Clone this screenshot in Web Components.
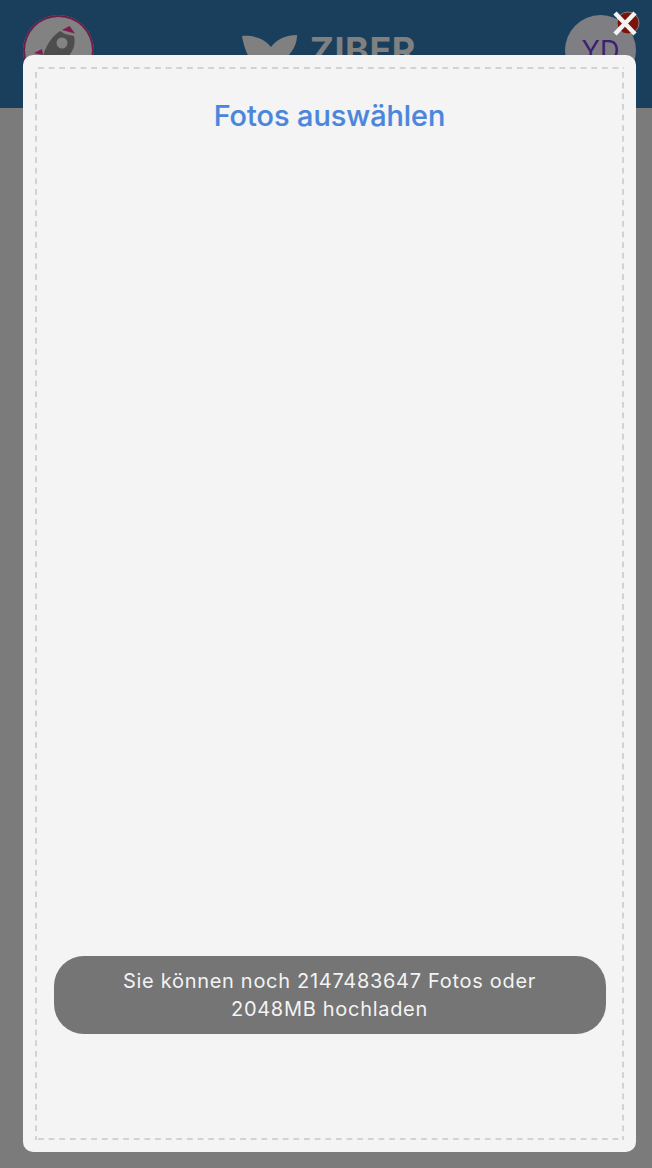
<!DOCTYPE html>
<html>
<head>
<meta charset="utf-8">
<title>Fotos auswählen</title>
<style>
  html, body { margin: 0; height: 100%; }
  body { background: #7b7b7b; font-family: Inter, "Liberation Sans", sans-serif; overflow: hidden; }
</style>
</head>
<body>
<app-header>
  <user-avatar slot="left" bordered>
    <svg viewBox="0 0 71 71" width="71" height="71">
      <path d="M37 16 L42 19 L51 21 C53 30 50 36 45 42 L42 56 L18 56 L20 41 C23 31 28 22 37 16 Z" fill="#4d4d4d"/>
      <path d="M39 15 L46.500 11 L52 18.500 Z" fill="#7d1d4f"/>
      <path d="M11 38 L19 34 L20 40 Z" fill="#7d1d4f"/>
      <circle cx="39" cy="28" r="5.500" fill="#838383"/>
    </svg>
  </user-avatar>
  <brand-logo>ZIBER</brand-logo>
  <user-avatar slot="right">YD</user-avatar>
</app-header>

<photo-modal>
  <span slot="title">Fotos auswählen</span>
  <span slot="hint">Sie können noch 2147483647 Fotos oder<br>2048MB hochladen</span>
</photo-modal>
<close-button></close-button>

<script>
class AppHeader extends HTMLElement {
  constructor() {
    super();
    this.attachShadow({ mode: 'open' });
    this.shadowRoot.innerHTML = `
      <style>
        :host {
          display: flex;
          justify-content: space-between;
          align-items: flex-start;
          box-sizing: border-box;
          height: 108px;
          padding: 15px 16px 0 23px;
          background: #1a3f5c;
        }
      </style>
      <slot name="left"></slot>
      <slot></slot>
      <slot name="right"></slot>
    `;
  }
}

class UserAvatar extends HTMLElement {
  constructor() {
    super();
    this.attachShadow({ mode: 'open' });
    this.shadowRoot.innerHTML = `
      <style>
        :host {
          display: flex;
          align-items: center;
          justify-content: center;
          box-sizing: border-box;
          width: 71px;
          height: 71px;
          border-radius: 50%;
          overflow: hidden;
          background: #7f7f83;
          color: #3c1f6e;
          font-size: 27px;
          line-height: 1;
        }
        :host([bordered]) {
          background: #828282;
          box-shadow: inset 0 0 0 2px #6f1d49;
        }
        slot { display: block; }
        ::slotted(svg) { display: block; }
      </style>
      <slot></slot>
    `;
  }
}

class BrandLogo extends HTMLElement {
  constructor() {
    super();
    this.attachShadow({ mode: 'open' });
    this.shadowRoot.innerHTML = `
      <style>
        :host {
          display: flex;
          align-items: flex-start;
          gap: 12px;
          margin-top: 20px;
          margin-left: -1px;
          color: #808080;
          font-size: 36px;
          font-weight: 700;
          line-height: 1;
          letter-spacing: 0.5px;
        }
        svg { display: block; flex: none; }
        span { display: block; margin-top: -3px; }
      </style>
      <svg width="56" height="44" viewBox="0 0 56 44">
        <path d="M0 1 C12 0 23 4 29 12 C35 4 44 0 55 0 C55 8 52 14 47 20 C44 30 38 38 29 42 C18 38 4 26 0 1 Z" fill="#808080"/>
      </svg>
      <span><slot></slot></span>
    `;
  }
}

class PhotoModal extends HTMLElement {
  constructor() {
    super();
    this.attachShadow({ mode: 'open' });
    this.shadowRoot.innerHTML = `
      <style>
        :host {
          position: absolute;
          left: 23px;
          top: 55px;
          width: 613px;
          height: 1097px;
          box-sizing: border-box;
          padding: 12px;
          background: #f4f4f4;
          border-radius: 10px;
        }
        /* css dashed gives a tighter rhythm than the reference, so dashes are gradients */
        .drop {
          --dash: #d2d2d2;
          box-sizing: border-box;
          height: 100%;
          display: flex;
          flex-direction: column;
          align-items: center;
          padding: 30px 18px 106px;
          background:
            linear-gradient(to right, var(--dash) 5.5px, transparent 5.5px) 3px 0 / 10.65px 2px repeat-x,
            linear-gradient(to right, var(--dash) 5.5px, transparent 5.5px) 3px 100% / 10.65px 2px repeat-x,
            linear-gradient(to bottom, var(--dash) 5.5px, transparent 5.5px) 0 5px / 2px 10.65px repeat-y,
            linear-gradient(to bottom, var(--dash) 5.5px, transparent 5.5px) 100% 5px / 2px 10.65px repeat-y;
        }
        .title {
          color: #4a86dc;
          font-size: 28.8px;
          font-weight: 500;
          line-height: 38px;
          -webkit-text-stroke: 0.2px #4a86dc;
        }
        .hint {
          box-sizing: border-box;
          width: 552px;
          height: 78px;
          margin-top: auto;
          display: flex;
          align-items: center;
          justify-content: center;
          text-align: center;
          background: #757575;
          border-radius: 30px;
          color: #f3f3f3;
          font-size: 20px;
          line-height: 28px;
          letter-spacing: 0.7px;
        }
      </style>
      <div class="drop">
        <div class="title"><slot name="title"></slot></div>
        <div class="hint"><div><slot name="hint"></slot></div></div>
      </div>
    `;
  }
}

class CloseButton extends HTMLElement {
  constructor() {
    super();
    this.attachShadow({ mode: 'open' });
    this.shadowRoot.innerHTML = `
      <style>
        :host {
          position: absolute;
          left: 610px;
          top: 8px;
          width: 30px;
          height: 30px;
          display: block;
        }
        svg { display: block; }
      </style>
      <svg width="30" height="30" viewBox="0 0 30 30">
        <circle cx="18" cy="15" r="11" fill="#7a140a" stroke="#8a7f80" stroke-width="1"/>
        <path d="M5 5 L25 26 M25 5 L5 26" stroke="#f3f3f3" stroke-width="4.500" fill="none"/>
      </svg>
    `;
  }
}

customElements.define('app-header', AppHeader);
customElements.define('user-avatar', UserAvatar);
customElements.define('brand-logo', BrandLogo);
customElements.define('photo-modal', PhotoModal);
customElements.define('close-button', CloseButton);
</script>
</body>
</html>
